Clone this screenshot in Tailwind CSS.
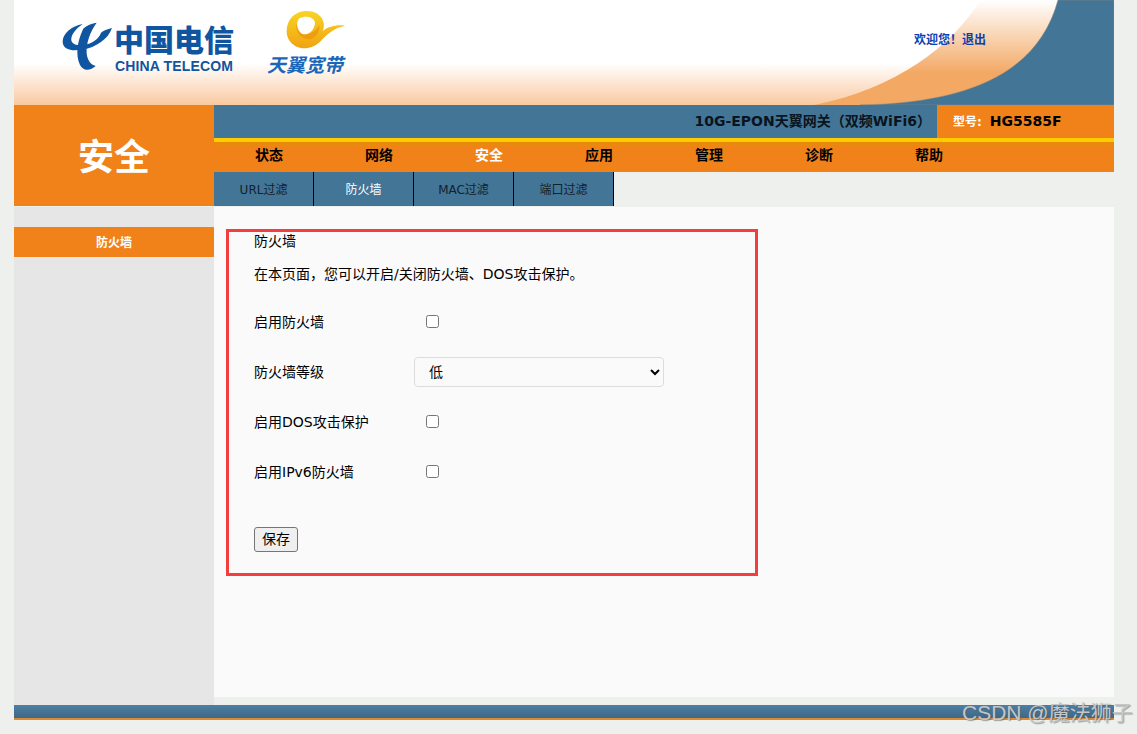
<!DOCTYPE html>
<html lang="zh-CN">
<head>
  <meta charset="UTF-8">
  <title>安全 - 防火墙</title>
  <script src="https://cdn.jsdelivr.net/npm/@tailwindcss/browser@4"></script>
</head>
<body class="bg-[#eef0ee] h-[734px] overflow-hidden relative font-['DejaVu_Sans','Noto_Sans_CJK_SC',sans-serif] text-[14px] text-black">
  <div class="w-[1100px] ml-[14px]">
    <!-- banner -->
    <header class="relative h-[105px] bg-gradient-to-b from-white from-60% to-[#f9c9a1] overflow-hidden">
      <svg class="absolute inset-0" width="1100" height="105" viewBox="0 0 1100 105">
        <defs>
          <linearGradient id="band" x1="0" y1="0" x2="0" y2="1">
            <stop offset="0" stop-color="#fff"/>
            <stop offset="0.7" stop-color="#f3a864"/>
            <stop offset="1" stop-color="#f3a864"/>
          </linearGradient>
        </defs>
        <path d="M966 0C940 45 880 90 800 105L1100 105L1100 0Z" fill="url(#band)"/>
        <path d="M1044 0C1025 70 960 103 846 105L1100 105L1100 0Z" fill="#437596" stroke="#8a8a80" stroke-opacity="0.5"/>
      </svg>
      <!-- China Telecom logo -->
      <svg class="absolute left-[46px] top-[20px]" width="56" height="54" viewBox="180 60 168 162">
        <path d="M248 72C215 78 188 100 188 125C188 148 215 155 250 148C285 143 325 118 336 84C322 88 310 92 303 98C296 118 275 132 248 135C225 138 212 130 214 115C216 100 230 85 248 72Z" fill="#0f55a0"/>
        <path d="M290 68C268 72 252 80 248 90C232 125 226 165 240 195C245 205 255 210 262 209C270 209 280 205 287 198C272 195 262 180 260 160C258 130 270 95 290 68Z" fill="#0f55a0"/>
      </svg>
      <div class="absolute left-[100px] top-[21px] text-[#0f55a0] font-['Noto_Sans_CJK_SC',sans-serif] font-black text-[30px] leading-[34px] whitespace-nowrap">中国电信</div>
      <div class="absolute left-[101px] top-[59px] text-[#0f55a0] font-['Liberation_Sans',sans-serif] font-bold text-[14px] leading-[15px] tracking-[0.15px] whitespace-nowrap">CHINA TELECOM</div>
      <!-- Tianyi logo -->
      <svg class="absolute left-[246px] top-[5px]" width="90" height="52" viewBox="0 0 270 156">
        <defs>
          <linearGradient id="swirl" x1="0" y1="0" x2="0" y2="1">
            <stop offset="0" stop-color="#f9d423"/>
            <stop offset="1" stop-color="#f0a312"/>
          </linearGradient>
        </defs>
        <path fill-rule="evenodd" fill="url(#swirl)" d="M135 18C185 15 200 55 188 78C205 65 230 58 255 62C225 68 205 85 190 100C175 118 160 128 138 130C105 132 78 108 80 75C82 42 105 20 135 18ZM118 40C135 30 162 35 165 52C165 75 145 92 128 88C112 82 105 55 118 40Z"/>
        <path d="M110 52C104 78 122 104 148 103C168 100 180 80 178 60C172 76 148 92 128 88C116 82 110 68 110 52Z" fill="#ee9c10"/>
      </svg>
      <div class="absolute left-[253px] top-[52px] text-[#1a66b8] font-['Noto_Sans_CJK_SC',sans-serif] font-bold italic text-[19px] leading-[24px] whitespace-nowrap">天翼宽带</div>
      <div class="absolute left-[900px] top-[32px] text-[12px] leading-[16px] font-bold text-[#0b3fb0] whitespace-nowrap">欢迎您！<a href="#">退出</a></div>
    </header>

    <div class="flex h-[101px]">
      <div class="w-[200px] bg-[#f08219] flex items-center justify-center pt-[4px] text-white text-[36px] font-bold">安全</div>
      <div class="flex-1 flex flex-col">
        <!-- product bar -->
        <div class="h-[33px] bg-[#437596] flex justify-end font-bold">
          <div class="flex items-center pr-[6px] text-[#0a1420] text-[14px]">10G-EPON天翼网关（双频WiFi6）</div>
          <div class="w-[177px] bg-[#f08219] flex items-center pl-[16px]">
            <span class="text-white text-[12px]">型号:</span>
            <span class="ml-[8px] text-[14px]">HG5585F</span>
          </div>
        </div>
        <div class="h-[4px] bg-[#ffcc00]"></div>
        <!-- main nav -->
        <nav class="h-[30px] bg-[#f08219] border-t-[4px] border-[#e88a0c] flex items-center font-bold text-[14px] pb-[8px]">
          <a href="#" class="w-[110px] text-center">状态</a>
          <a href="#" class="w-[110px] text-center">网络</a>
          <a href="#" class="w-[110px] text-center text-white">安全</a>
          <a href="#" class="w-[110px] text-center">应用</a>
          <a href="#" class="w-[110px] text-center">管理</a>
          <a href="#" class="w-[110px] text-center">诊断</a>
          <a href="#" class="w-[110px] text-center">帮助</a>
        </nav>
        <!-- sub nav -->
        <div class="flex h-[34px] text-[12px] text-[#14212b]">
          <a href="#" class="w-[100px] bg-[#437596] border-r border-black flex items-center justify-center pt-[2px]">URL过滤</a>
          <a href="#" class="w-[100px] bg-[#437596] border-r border-black flex items-center justify-center pt-[2px] text-white">防火墙</a>
          <a href="#" class="w-[100px] bg-[#437596] border-r border-black flex items-center justify-center pt-[2px]">MAC过滤</a>
          <a href="#" class="w-[100px] bg-[#437596] border-r border-black flex items-center justify-center pt-[2px]">端口过滤</a>
        </div>
      </div>
    </div>

    <div class="flex h-[498px] mt-[1px] items-start">
      <aside class="w-[200px] h-full bg-[#e6e6e6] pt-[20px]">
        <div class="h-[30px] bg-[#f08219] text-white font-bold text-[12px] flex items-center justify-center pt-[1px]">防火墙</div>
      </aside>
      <main class="flex-1 h-[490px] bg-[#fafafa] pt-[22px] pl-[12px]">
        <div class="w-[532px] h-[347px] border-[3px] border-[#f43e3e] pl-[25px]">
          <h2 class="leading-[18px]">防火墙</h2>
          <p class="mt-[15px] leading-[18px]">在本页面，您可以开启/关闭防火墙、DOS攻击保护。</p>
          <div class="mt-[14px]">
            <div class="flex items-center h-[50px]">
              <label class="w-[160px]">启用防火墙</label>
              <input type="checkbox" class="ml-[12px] mb-[2px]">
            </div>
            <div class="flex items-center h-[50px]">
              <label class="w-[160px]">防火墙等级</label>
              <select class="w-[250px] h-[30px] pl-[10px] bg-[#fafafa] border border-[#dcdcdc] rounded-[4px]">
                <option>低</option>
              </select>
            </div>
            <div class="flex items-center h-[50px]">
              <label class="w-[160px]">启用DOS攻击保护</label>
              <input type="checkbox" class="ml-[12px] mb-[2px]">
            </div>
            <div class="flex items-center h-[50px]">
              <label class="w-[160px]">启用IPv6防火墙</label>
              <input type="checkbox" class="ml-[12px] mb-[2px]">
            </div>
          </div>
          <button class="mt-[30px] w-[44px] h-[25px] bg-[#efefef] border border-[#767676] rounded-[3px] text-[14px]">保存</button>
        </div>
      </main>
    </div>

    <div class="h-[15px] bg-gradient-to-b from-[#4b7fa5] to-[#3f6886] border-b-[2px] border-[#d98a32]"></div>
  </div>

  <div class="absolute left-[962px] top-[699px] text-[21px] leading-[28px] text-[#c4c6c8] [text-shadow:1px_1px_1px_rgba(90,90,90,0.55)] font-['Liberation_Sans','Noto_Sans_CJK_SC',sans-serif] whitespace-nowrap">CSDN @魔法狮子</div>
</body>
</html>
